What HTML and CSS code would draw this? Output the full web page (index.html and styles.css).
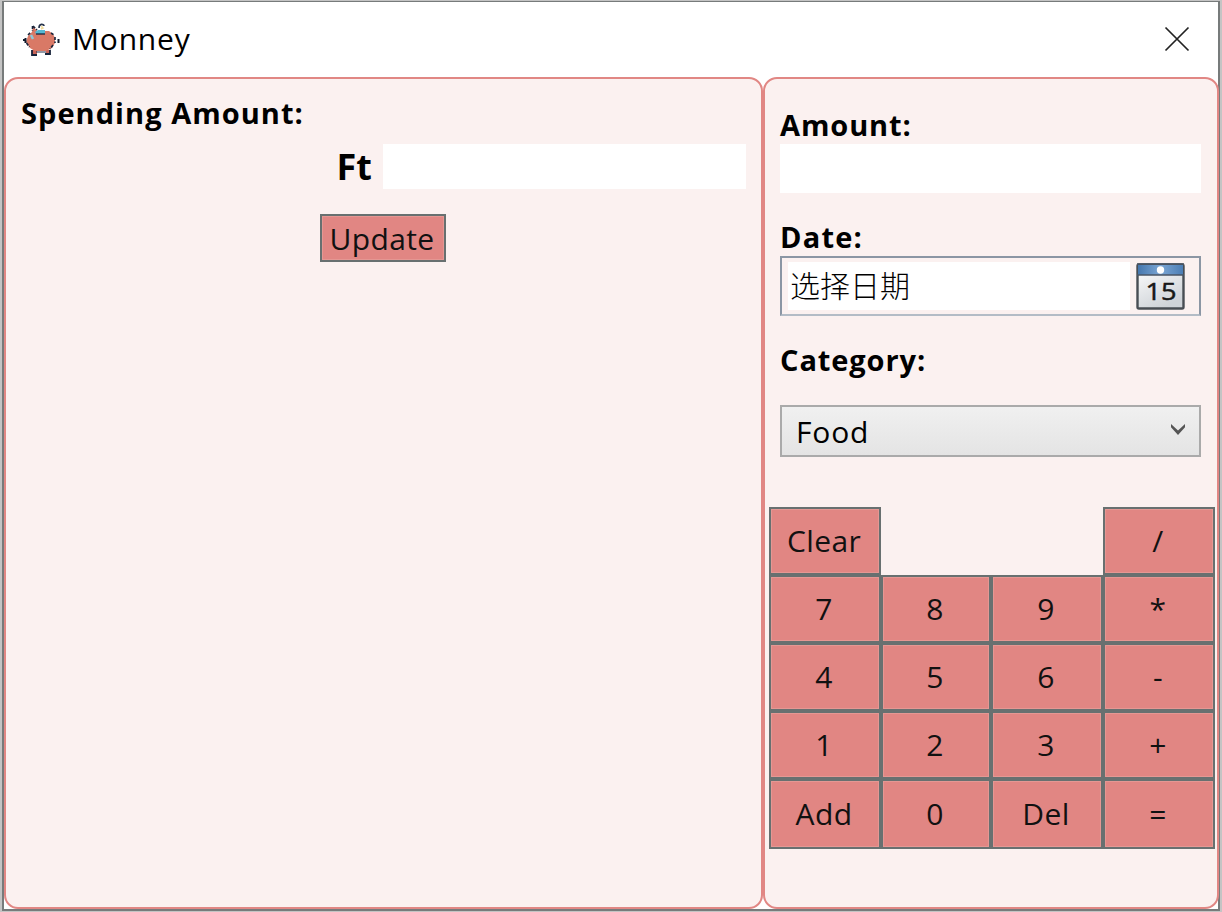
FILE: index.html
```html
<!DOCTYPE html>
<html lang="en">
<head>
<meta charset="utf-8">
<title>Monney</title>
<link rel="stylesheet" href="styles.css">
</head>
<body>
<div class="window">
  <header class="titlebar">
    <svg class="pig" viewBox="0 0 38 34" width="38" height="34">
      <path d="M9 27h5v4H9zM23 27h4v4h-4z" fill="#c96558"/>
      <path d="M9 27v5h5M22 31h5v-4" fill="none" stroke="#18233a" stroke-width="1.8"/>
      <path d="M10 3l4 5h12l4 3 2 4v5l-3 5-6 3H12l-5-3-4-6 2-6 4-4z" fill="#d97966"/>
      <path d="M9.500 3v5M10 3l4 4M28 10l3 2M32 14v6M30 22l-3 4M3.500 20l3 4M5 12l3-3" fill="none" stroke="#18233a" stroke-width="1.6" stroke-dasharray="3 1.5"/>
      <path d="M13 29h10" stroke="#26334c" stroke-width="1"/>
      <path d="M12 9l3-2h7v4H13z" fill="#55b8d2"/>
      <path d="M13 11h9" stroke="#18233a" stroke-width="1.3"/>
      <path d="M16 5c0-5 5-4 5-2" fill="none" stroke="#26334c" stroke-width="1.6"/>
      <path d="M18 3l2 2-2 1" fill="none" stroke="#f1dc9b" stroke-width="1.5"/>
      <path d="M8 12l2 4" stroke="#8cc9da" stroke-width="2.5"/>
      <path d="M0 17h3M2.500 15v5M35.500 16v4" stroke="#101a2d" stroke-width="2"/>
    </svg>
    <h1 class="title">Monney</h1>
    <svg class="close" viewBox="0 0 26 26" width="26" height="26"><path d="M1.500 1.500l23 23M24.500 1.500l-23 23" stroke="#222" stroke-width="1.7"/></svg>
  </header>
  <main class="content">
    <section class="panel spending">
      <h2 class="label spending-label">Spending Amount:</h2>
      <div class="limit-row"><span class="currency">Ft</span><div class="limit-input"></div></div>
      <button class="button update">Update</button>
    </section>
    <section class="panel entry">
      <div class="fields">
        <div class="label amount-label">Amount:</div>
        <div class="amount-input"></div>
        <div class="label date-label">Date:</div>
        <div class="date-picker">
          <span class="date-text" lang="zh">选择日期</span>
          <svg class="calendar" viewBox="0 0 49 47" width="49" height="47">
            <defs>
              <linearGradient id="page" x2="0.5" y2="1"><stop stop-color="#fff"/><stop offset="1" stop-color="#cfd3d8"/></linearGradient>
              <linearGradient id="band" x2="1" y2="0"><stop stop-color="#4577ae"/><stop offset=".5" stop-color="#7ba6d4"/><stop offset="1" stop-color="#4c7eb5"/></linearGradient>
            </defs>
            <rect x="1.500" y="1.500" width="46" height="44" rx="1.500" fill="url(#page)" stroke="#484d53" stroke-width="2.400"/>
            <path d="M2 2h45v10H2z" fill="url(#band)"/>
            <path d="M1 12h47M1 1h47" stroke="#4a5666" stroke-width="1.600"/>
            <circle cx="24.500" cy="7" r="3.700" fill="#fff"/>
            <text class="calendar-day" x="25" y="37" text-anchor="middle" textLength="31" lengthAdjust="spacingAndGlyphs">15</text>
          </svg>
        </div>
        <div class="label category-label">Category:</div>
        <div class="select"><span class="select-text">Food</span>
          <svg class="chevron" viewBox="0 0 16 13" width="16" height="13"><path d="M1 1v3.300L8 12l7-7.700V1L8 7.600z" fill="#555"/></svg>
        </div>
      </div>
      <div class="keypad">
        <button class="button">Clear</button><button class="button divide">/</button>
        <button class="button">7</button><button class="button">8</button><button class="button">9</button><button class="button">*</button>
        <button class="button">4</button><button class="button">5</button><button class="button">6</button><button class="button">-</button>
        <button class="button">1</button><button class="button">2</button><button class="button">3</button><button class="button">+</button>
        <button class="button">Add</button><button class="button">0</button><button class="button">Del</button><button class="button">=</button>
      </div>
    </section>
  </main>
</div>
</body>
</html>
```
FILE: styles.css
```css
* { box-sizing: border-box; }
body {
  margin: 0;
  padding: 1px 2px 1px 2px;
  width: 1222px;
  height: 912px;
  overflow: hidden;
  background: #c4c4c4;
  color: #000;
  font: 30px/40px "Open Sans", "Noto Sans", "Noto Sans CJK SC", sans-serif;
}
.window {
  display: flex;
  flex-direction: column;
  height: 910px;
  border: 2px solid #777b7b;
  border-top-width: 1px;
  background: #fff;
}
.titlebar { display: flex; height: 75px; padding: 0 28px 0 19px; align-items: center; }
.pig { margin-top: 1px; }
.title { margin: 0 auto 1px 11px; font-size: 30px; font-weight: 400; letter-spacing: .8px; }
.close { margin-top: -2px; }
.content { display: grid; grid-template-columns: 759px 1fr; flex: 1; min-height: 0; }
.panel { border: 2px solid #e18784; border-radius: 14px; background: #fbf1f0; }
.label { margin: 0; font-size: 29px; font-weight: 700; letter-spacing: .9px; }
.spending { display: flex; flex-direction: column; padding: 14px 15px 0 15px; }
.spending-label { letter-spacing: 1.05px; }
.limit-row { display: flex; justify-content: flex-end; margin-top: 11px; height: 45px; }
.currency { margin-right: 11px; font-size: 36px; font-weight: 700; line-height: 45px; }
.limit-input { width: 363px; background: #fff; }
.button {
  display: flex;
  align-items: center;
  justify-content: center;
  margin: 0;
  padding: 0 2px 0 0;
  border: 2px solid #687070;
  background: #e18683;
  box-shadow: inset 0 0 0 1px #e59793;
  color: #111;
  font: inherit;
  letter-spacing: .4px;
}
.update { width: 126px; height: 48px; margin: 25px 0 0 299px; padding-top: 2px; }
.entry { padding: 26px 2px 0 4px; }
.fields { padding: 0 11px 0 11px; }
.amount-input { width: 421px; height: 49px; margin-top: -1px; background: #fff; }
.date-label { margin-top: 24px; letter-spacing: 1.2px; }
.date-picker { display: flex; align-items: center; width: 421px; height: 60px; margin-top: -1px; padding: 3px 13px 3px 6px; border: 2px solid #8b96a4; border-bottom-color: #b3bcc6; }
.date-text { width: 342px; height: 48px; padding-left: 2px; background: #fff; font: 30px/44px "Noto Sans CJK SC", sans-serif; font-weight: 300; }
.calendar { margin-left: 6px; }
.calendar-day { font: 23px "Open Sans", sans-serif; fill: #181818; stroke: #181818; stroke-width: .5px; }
.category-label { margin-top: 24px; }
.select { display: flex; align-items: center; justify-content: space-between; width: 421px; height: 52px; margin-top: 25px; padding: 0 13px 0 14px; border: 2px solid #aaa; background: linear-gradient(#f0f0f0, #e4e4e4); }
.select-text { margin-top: 1px; letter-spacing: .8px; }
.chevron { margin-top: -4px; }
.keypad { display: grid; grid-template-columns: 112px 110px 112px 112px; grid-template-rows: repeat(4, 68px) 70px; margin-top: 50px; }
.divide { grid-column: 4; }
```
